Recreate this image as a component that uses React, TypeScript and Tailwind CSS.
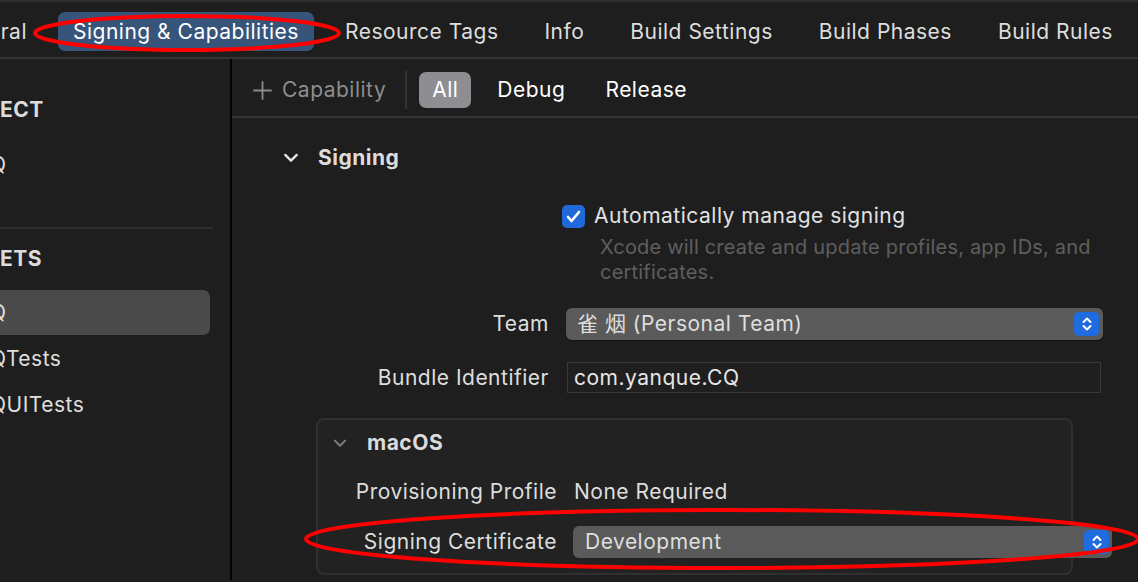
import React from "react";

const tabs = ["Signing & Capabilities", "Resource Tags", "Info", "Build Settings", "Build Phases", "Build Rules"];

function Stepper() {
  return (
    <div className="flex h-[24px] w-[25px] shrink-0 items-center justify-center rounded-[5px] bg-[#1f6ce0]">
      <svg width="12" height="16" viewBox="0 0 12 16" fill="none" stroke="white" strokeWidth="2" strokeLinecap="round" strokeLinejoin="round">
        <path d="M2.5 6 L6 2.5 L9.5 6" />
        <path d="M2.5 10 L6 13.5 L9.5 10" />
      </svg>
    </div>
  );
}

function Chevron({ color, size }: { color: string; size: number }) {
  return (
    <svg width={size} height={size * 0.6} viewBox="0 0 16 10" fill="none" stroke={color} strokeWidth="2.4" strokeLinecap="round" strokeLinejoin="round">
      <path d="M2 2 L8 8 L14 2" />
    </svg>
  );
}

export default function App() {
  return (
    <div
      className="relative h-[582px] w-[1138px] overflow-hidden bg-[#1e1e1e] text-[21px] leading-[30px] tracking-[0.5px] text-[#dedede]"
      style={{ fontFamily: "Inter, 'Noto Sans CJK SC', sans-serif" }}
    >
      <div className="h-[2px] bg-[#2e2e2e]" />
      {/* tab bar */}
      <div className="flex h-[57px] items-center gap-[16px] border-b-2 border-[#333333] pt-[4px] whitespace-nowrap">
        <div className="flex w-[42px] shrink-0 justify-end overflow-hidden pr-[15px]">eral</div>
        {tabs.map((t, i) => (
          <div
            key={t}
            className={`flex h-[39px] shrink-0 items-center rounded-[7px] px-[15px] ${i === 0 ? "bg-[#37557a] text-white" : ""}`}
          >
            {t}
          </div>
        ))}
      </div>

      <div className="flex h-[521px]">
        {/* sidebar */}
        <aside className="w-[232px] shrink-0 border-r-2 border-black pr-[20px]">
          <div className="pt-[36px] font-bold text-[#dcdcdc]">ECT</div>
          <div className="mt-[25px] -ml-[10px]">Q</div>
          <div className="mt-[47px] -mr-[3px] h-[2px] bg-[#2f2f2f]" />
          <div className="mt-[15px] font-bold text-[#dcdcdc]">ETS</div>
          <div className="mt-[16px] flex h-[45px] items-center rounded-r-[7px] bg-[#4a4a4a]">
            <span className="-ml-[10px]">Q</span>
          </div>
          <div className="mt-[1px] flex h-[46px] items-center">
            <span className="-ml-[10px]">QTests</span>
          </div>
          <div className="flex h-[46px] items-center">
            <span className="-ml-[10px]">QUITests</span>
          </div>
        </aside>

        {/* main */}
        <main className="min-w-0 flex-1">
          {/* toolbar */}
          <div className="flex h-[59px] items-center border-b-2 border-[#333333] pl-[21px] pt-[5px]">
            <svg width="19" height="19" viewBox="0 0 19 19" stroke="#8a8a8a" strokeWidth="1.8" strokeLinecap="round">
              <path d="M9.5 1 V18 M1 9.5 H18" />
            </svg>
            <span className="ml-[10px] text-[#8d8d8d]">Capability</span>
            <div className="ml-[19px] h-[38px] w-[2px] bg-[#333333]" />
            <div className="ml-[12px] flex h-[36px] items-center rounded-[7px] bg-[#8d8d92] px-[13px] text-white">All</div>
            <span className="ml-[26px] text-white">Debug</span>
            <span className="ml-[40px] text-white">Release</span>
          </div>

          {/* signing header */}
          <div className="flex h-[78px] items-center pl-[51px] pt-[2px]">
            <Chevron color="#e6e6e6" size={16} />
            <span className="ml-[19px] font-bold text-[#dcdcdc]">Signing</span>
          </div>

          {/* checkbox */}
          <div className="ml-[330px] mt-[5px] flex items-center gap-[9px]">
            <div className="flex h-[23px] w-[23px] items-center justify-center rounded-[5px] bg-[#2169d9]">
              <svg width="15" height="13" viewBox="0 0 15 13" fill="none" stroke="white" strokeWidth="2.6" strokeLinecap="round" strokeLinejoin="round">
                <path d="M2 7 L5.5 11 L13 2" />
              </svg>
            </div>
            <span className="text-[#e2e2e2]">Automatically manage signing</span>
          </div>
          <div className="ml-[368px] mt-[4px] w-[500px] text-[20px] leading-[25px] tracking-[0.2px] text-[#5f5f5f]">
            Xcode will create and update profiles, app IDs, and certificates.
          </div>

          {/* team */}
          <div className="mt-[23px] flex items-center">
            <div className="w-[317px] shrink-0 text-right">Team</div>
            <div className="ml-[17px] flex h-[32px] w-[537px] shrink-0 items-center justify-between rounded-[6px] bg-[#5a5a5a] pl-[11px] pr-[4px] shadow-[0_1px_1px_rgba(0,0,0,0.4)]">
              <span>雀 烟 (Personal Team)</span>
              <Stepper />
            </div>
          </div>

          {/* bundle */}
          <div className="mt-[22px] flex items-center">
            <div className="w-[317px] shrink-0 text-right">Bundle Identifier</div>
            <div className="ml-[18px] flex h-[31px] w-[534px] shrink-0 items-center border border-[#383838] bg-[#1f1f1f] pl-[6px] text-[#e6e6e6]">
              com.yanque.CQ
            </div>
          </div>

          {/* macOS box */}
          <div className="ml-[84px] mt-[25px] h-[157px] w-[757px] rounded-[8px] border-2 border-[#303030] bg-[#222222]">
            <div className="flex h-[46px] items-center pl-[15px]">
              <Chevron color="#7a7a7a" size={14} />
              <span className="ml-[20px] font-bold text-[#dcdcdc]">macOS</span>
            </div>
            <div className="mt-[1px] flex h-[50px] items-center">
              <div className="w-[239px] shrink-0 text-right">Provisioning Profile</div>
              <span className="ml-[17px]">None Required</span>
            </div>
            <div className="mt-[9px] flex items-center">
              <div className="w-[239px] shrink-0 text-right">Signing Certificate</div>
              <div className="ml-[16px] flex h-[32px] w-[539px] shrink-0 items-center justify-between rounded-[6px] bg-[#5a5a5a] pl-[12px] pr-[3px]">
                <span>Development</span>
                <Stepper />
              </div>
            </div>
          </div>
        </main>
      </div>

      {/* red annotation ellipses */}
      <svg className="pointer-events-none absolute left-0 top-0" width="1138" height="582" fill="none">
        <ellipse cx="187" cy="33" rx="152" ry="17" stroke="#ff0000" strokeWidth="4" />
        <ellipse cx="722" cy="539" rx="416" ry="29" stroke="#ff0000" strokeWidth="4" />
      </svg>
    </div>
  );
}
